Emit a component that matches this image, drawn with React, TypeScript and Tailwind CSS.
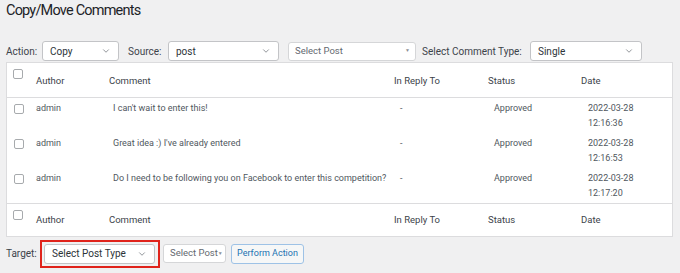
import { ChevronDown } from "lucide-react";

const font = { fontFamily: "Roboto, 'Liberation Sans', sans-serif" };

function Select({ label, width }: { label: string; width: string }) {
  return (
    <div
      className={`flex items-center justify-between h-[20px] ${width} bg-white border border-[#c3c4c7] rounded-[3px] pl-[7px] pr-[7px] text-[10px] text-[#2c3338] whitespace-nowrap`}
    >
      <span>{label}</span>
      <ChevronDown size={10} strokeWidth={1.5} className="text-[#50575e]" />
    </div>
  );
}

function SmallSelect({ label, width }: { label: string; width: string }) {
  return (
    <div
      className={`flex items-center justify-between h-[19px] ${width} bg-white border border-[#d5d6d8] rounded-[3px] pl-[6px] pr-[5px] text-[9.5px] text-[#646970] whitespace-nowrap`}
    >
      <span>{label}</span>
      <span className="text-[5px] text-[#8c8f94]">▼</span>
    </div>
  );
}

function Checkbox() {
  return <div className="w-[10px] h-[10px] bg-white border border-[#a7aaad] rounded-[2px]" />;
}

const cols = "grid grid-cols-[29px_73px_285px_94px_93px_1fr]";

function HeadRow({ top }: { top?: boolean }) {
  const pad = top ? "pt-[12px]" : "pt-[10px]";
  return (
    <div
      className={`${cols} ${top ? "h-[35px] border-b" : "h-[33px] border-t"} border-[#dcdcde] text-[9.5px] leading-[12px] text-[#3c434a]`}
    >
      <div className="pl-[6px] pt-[6px]">
        <Checkbox />
      </div>
      <div className={pad}>Author</div>
      <div className={pad}>Comment</div>
      <div className={pad}>In Reply To</div>
      <div className={pad}>Status</div>
      <div className={pad}>Date</div>
    </div>
  );
}

const rows = [
  { comment: "I can't wait to enter this!", time: "12:16:36" },
  { comment: "Great idea :) I've already entered", time: "12:16:53" },
  { comment: "Do I need to be following you on Facebook to enter this competition?", time: "12:17:20" },
];

export default function App() {
  return (
    <div style={font} className="w-full h-[273px] overflow-hidden bg-[#f0f0f1] px-[6px]">
      <h1 className="text-[14.5px] tracking-[-0.8px] leading-[20px] pt-[1px] text-[#1d2327]">
        Copy/Move Comments
      </h1>

      <div className="flex items-center mt-[20px] h-[20px] text-[10px] text-[#3c434a]">
        <span className="w-[36px]">Action:</span>
        <Select label="Copy" width="w-[77px]" />
        <span className="ml-[9px] w-[40px]">Source:</span>
        <Select label="post" width="w-[111px]" />
        <div className="ml-[9px]">
          <SmallSelect label="Select Post" width="w-[128px]" />
        </div>
        <span className="ml-[6px] w-[108px]">Select Comment Type:</span>
        <Select label="Single" width="w-[112px]" />
      </div>

      <div className="mt-[1px] w-[667px] bg-white border border-[#dcdcde]">
        <HeadRow top />
        {rows.map((r) => (
          <div key={r.time} className={`${cols} h-[35px] text-[9px] leading-[15px] text-[#50575e]`}>
            <div className="pl-[7px] pt-[6px]">
              <Checkbox />
            </div>
            <div className="pt-[3px]">admin</div>
            <div className="pt-[3px] pl-[4px] whitespace-nowrap">{r.comment}</div>
            <div className="pt-[3px] pl-[6px]">-</div>
            <div className="pt-[3px] pl-[6px]">Approved</div>
            <div className="pt-[3px] pl-[7px]">
              2022-03-28
              <br />
              {r.time}
            </div>
          </div>
        ))}
        <HeadRow />
      </div>

      <div className="flex items-center mt-[2px] h-[29px] text-[10px] text-[#3c434a]">
        <span className="w-[34px]">Target:</span>
        <div className="border-2 border-[#e0231b] p-[2px] pr-[3px]">
          <Select label="Select Post Type" width="w-[111px]" />
        </div>
        <div className="ml-[3px]">
          <SmallSelect label="Select Post" width="w-[63px]" />
        </div>
        <div className="ml-[5px] h-[20px] w-[73px] flex items-center justify-center border border-[#9ec2e6] rounded-[3px] bg-[#f6f7f7] text-[9px] text-[#2271b1] whitespace-nowrap">
          Perform Action
        </div>
      </div>
    </div>
  );
}
